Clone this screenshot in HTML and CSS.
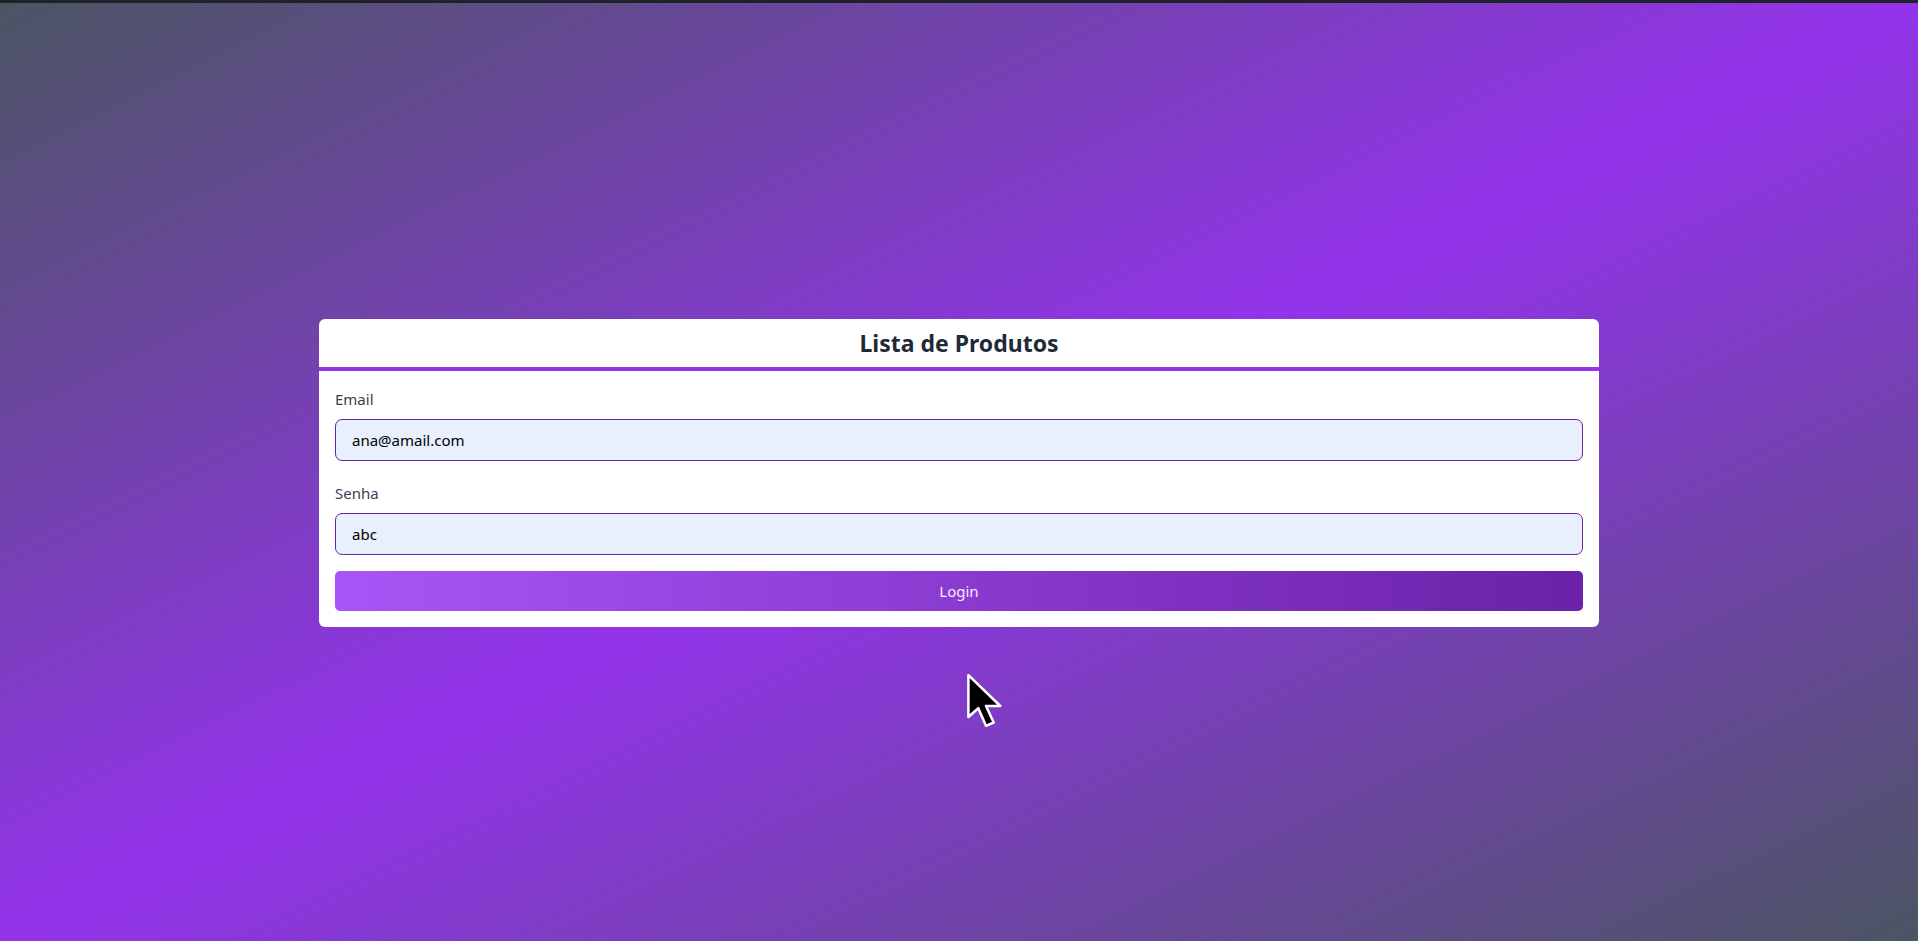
FILE: index.html
```html
<!DOCTYPE html>
<html lang="pt-BR">
<head>
<meta charset="utf-8">
<title>Lista de Produtos</title>
<link rel="stylesheet" href="styles.css">
</head>
<body>
<div class="topbar"></div>
<main class="page">
  <section class="card">
    <header class="card-header">
      <h1 class="title">Lista de Produtos</h1>
    </header>
    <form class="card-body">
      <div class="field field-email">
        <label class="label" for="email">Email</label>
        <input class="input" id="email" type="text" value="ana@amail.com">
      </div>
      <div class="field">
        <label class="label" for="senha">Senha</label>
        <input class="input" id="senha" type="text" value="abc">
      </div>
      <button class="btn" type="button">Login</button>
    </form>
  </section>
</main>
<svg class="cursor" width="40" height="55" viewBox="0 0 36 50" aria-hidden="true">
  <path d="M2 2 L2 40 L11 32 L18 48 L25 45 L18 30 L31 30 Z" fill="#000" stroke="#fff" stroke-width="2.3" stroke-linejoin="round"/>
</svg>
</body>
</html>
```

FILE: styles.css
```css
* { box-sizing: border-box; }
html, body { height: 100%; }
body {
  margin: 0;
  font-family: "Noto Sans", "Open Sans", sans-serif;
  background: linear-gradient(to bottom right, #4b5563 0%, #9333ea 50%, #4b5563 100%);
  display: flex;
  flex-direction: column;
  overflow: hidden;
}
.topbar {
  height: 3px;
  background: #1f2229;
  flex: none;
}
.page {
  flex: 1;
  display: flex;
  align-items: center;
  justify-content: center;
}
.card {
  width: 1280px;
  background: #fff;
  border-radius: 6px;
  overflow: hidden;
  margin-top: 2px;
}
.card-header {
  height: 52px;
  border-bottom: 4px solid #9333ea;
  display: flex;
  align-items: center;
  justify-content: center;
}
.title {
  margin: 0;
  font-size: 23px;
  line-height: 32px;
  font-weight: 700;
  color: #1f2937;
}
.card-body {
  padding: 16px;
  display: flex;
  flex-direction: column;
}
.field {
  display: flex;
  flex-direction: column;
  gap: 8px;
  margin-bottom: 16px;
}
.field-email { margin-bottom: 20px; }
.label {
  font-size: 15px;
  line-height: 24px;
  color: #374151;
}
.input {
  height: 42px;
  border: 1px solid #6b21a8;
  border-radius: 7px;
  background: #e8f0fe;
  padding: 0 16px;
  font-family: inherit;
  font-size: 15px;
  color: #000;
  outline: none;
}
.btn {
  height: 40px;
  border: none;
  border-radius: 5px;
  background: linear-gradient(to right, #a855f7, #6b21a8);
  color: #f5ecff;
  font-family: inherit;
  font-size: 15px;
  cursor: pointer;
}
.cursor {
  position: absolute;
  left: 966px;
  top: 673px;
}
```
